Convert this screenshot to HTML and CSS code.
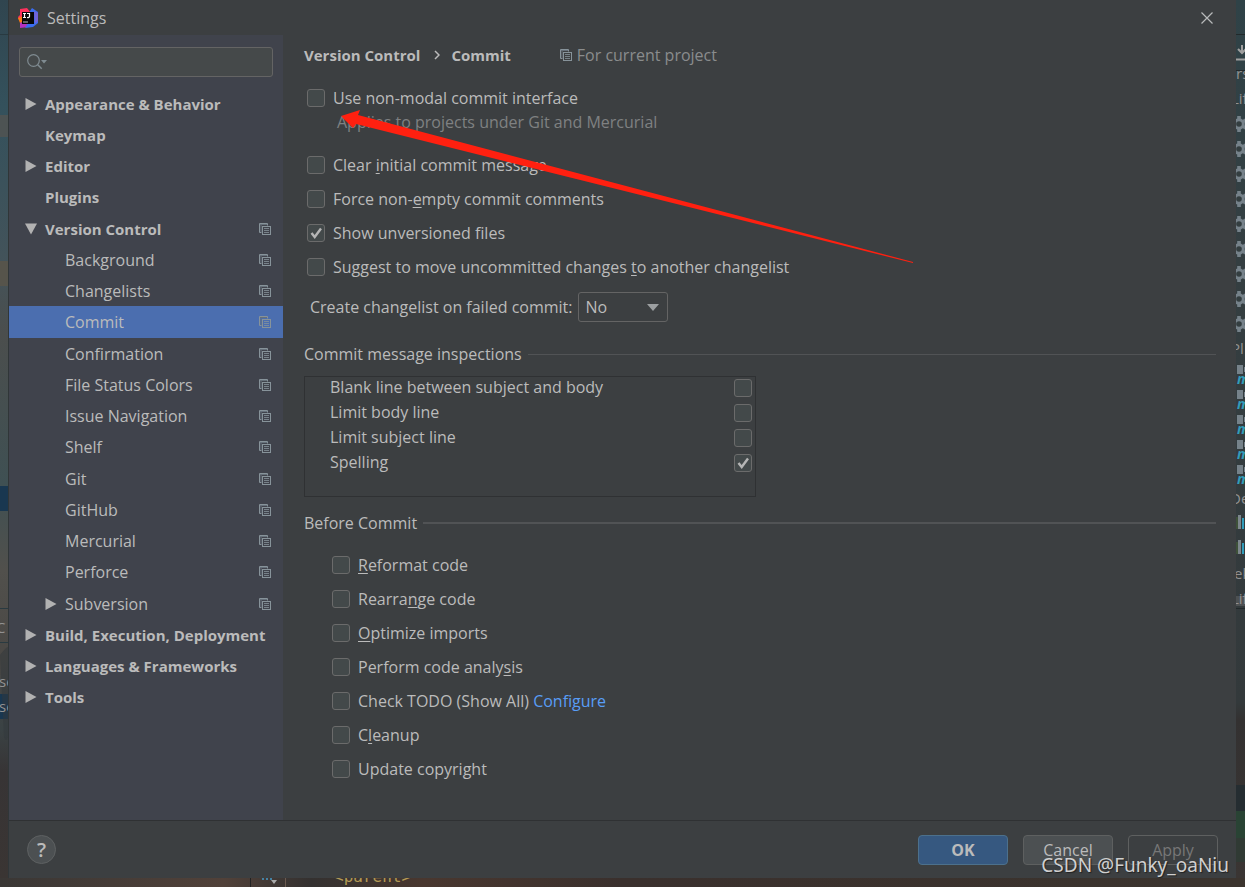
FILE: index.html
```html
<!DOCTYPE html>
<html lang="en">
<head>
<meta charset="utf-8">
<title>Settings</title>
<link rel="stylesheet" href="styles.css">
</head>
<body>
<svg class="defs" width="0" height="0" aria-hidden="true">
  <symbol id="copy" viewBox="0 0 12 12">
    <path d="M.5 9.500V.5h8v2M.5 9.500h2" fill="none" stroke="#87939a"/>
    <path d="M1 1.500h7M2 1v8" stroke="#66707a" fill="none"/>
    <rect x="3.500" y="3.500" width="8" height="8" fill="none" stroke="#87939a"/>
    <path d="M5 5.500h5M5 7.500h5M5 9.500h5" stroke="#87939a" stroke-width=".8"/>
  </symbol>
  <symbol id="right" viewBox="0 0 11 12"><path d="M0 0v12L11 6z" fill="#b2b2b2"/></symbol>
  <symbol id="down" viewBox="0 0 12 11"><path d="M0 0h12L6 11z" fill="#b2b2b2"/></symbol>
  <symbol id="gear" viewBox="0 0 16 16">
    <circle cx="8" cy="8" r="5.800" fill="#76828a"/>
    <path d="M8 0v16M1.100 4l13.800 8M1.100 12l13.800-8" stroke="#76828a" stroke-width="3.600"/>
    <circle cx="8" cy="8" r="2.800" fill="#343e40"/>
  </symbol>
  <symbol id="module" viewBox="0 0 16 19"><path d="M6 0h6v9H6zM13 2h3v5h-3z" fill="#76828a"/></symbol>
</svg>

<div class="desktop">
  <svg class="edge" aria-hidden="true">
    <defs><linearGradient id="lg" x1="0" y1="0" x2="0" y2="1">
      <stop offset="0" stop-color="#30454f"/><stop offset=".12" stop-color="#34515c"/><stop offset=".3" stop-color="#43535a"/>
      <stop offset=".38" stop-color="#4b4e4d"/><stop offset=".55" stop-color="#3f5053"/><stop offset=".65" stop-color="#51504c"/>
      <stop offset=".75" stop-color="#4a4845"/><stop offset=".83" stop-color="#3a4244"/><stop offset=".88" stop-color="#373435"/><stop offset="1" stop-color="#3a3533"/>
    </linearGradient></defs>
    <rect width="9" height="100%" fill="url(#lg)"/>
    <path d="M0 34.500h8M0 608.500h8M0 642.500h8" stroke="#293a41"/>
    <path d="M0 115h8v22H0z" fill="#4d5353"/>
    <path d="M0 261h8v25H0z" fill="#56544b"/>
    <path d="M0 486h8v25H0zM0 694h8v25H0z" fill="#193750"/>
    <path d="M0 655q6-8 8-8v90q-2 6-4 0z" fill="#32383b" opacity=".5"/>
    <text x="-4" y="633" class="ghost">C</text><text x="-1" y="687" class="ghost">se</text><text x="-1" y="712" class="ghost">se</text>
    <path d="M8.500 0v900" stroke="#303638"/>
  </svg>

  <main class="dialog">
    <header class="titlebar">
      <svg class="logo" viewBox="0 0 20 20" aria-hidden="true">
        <path d="M2 1 9 0l4 5-4 9-8-2-1-3 2-2z" fill="#fe315d"/>
        <path d="m0 10 5-2 2 6-5 1z" fill="#f97a12"/>
        <path d="m2 15 7-3 2 7-9 1z" fill="#b531bd"/>
        <path d="m12 3 2-3 6 4v11l-5 4-8 1 5-8z" fill="#3a6df0"/>
        <path d="m16 3 4 2v8l-3 3z" fill="#7163d8"/>
        <path d="M4 4h12v12H4z" fill="#080808"/>
        <path d="M5 5.500h3M6.500 5.500v4M5 9.500h3M9 5.500h3M11.500 5v3.500q0 1.200-2.500 1" fill="none" stroke="#fff" stroke-width="1.200"/>
        <path d="M5 14h5" stroke="#bbb"/>
      </svg>
      <h1 class="title">Settings</h1>
      <button class="close" aria-label="Close"><svg viewBox="0 0 12 12"><path d="m.5.5 11 11m0-11-11 11" stroke="#b8babb" stroke-width="1.200"/></svg></button>
    </header>

    <div class="content">
      <nav class="sidebar" aria-label="Settings categories">
        <label class="search">
          <svg viewBox="0 0 21 16" aria-hidden="true"><circle cx="6.500" cy="6.500" r="5.800" fill="none" stroke="#7f8b91" stroke-width="1.200"/><path d="m10.700 10.700 4 4" stroke="#7f8b91" stroke-width="1.500"/><path d="M14 6h6l-3 3.500z" fill="#7f8b91"/></svg>
          <input type="text" aria-label="Search settings">
        </label>
        <ul class="tree">
          <li class="row top"><svg class="arrow"><use href="#right"/></svg><span>Appearance &amp; Behavior</span></li>
          <li class="row top leaf"><span>Keymap</span></li>
          <li class="row top"><svg class="arrow"><use href="#right"/></svg><span>Editor</span></li>
          <li class="row top leaf"><span>Plugins</span></li>
          <li class="row top"><svg class="arrow"><use href="#down"/></svg><span>Version Control</span><svg class="copy"><use href="#copy"/></svg></li>
          <li class="row child"><span>Background</span><svg class="copy"><use href="#copy"/></svg></li>
          <li class="row child"><span>Changelists</span><svg class="copy"><use href="#copy"/></svg></li>
          <li class="row child selected"><span>Commit</span><svg class="copy"><use href="#copy"/></svg></li>
          <li class="row child"><span>Confirmation</span><svg class="copy"><use href="#copy"/></svg></li>
          <li class="row child"><span>File Status Colors</span><svg class="copy"><use href="#copy"/></svg></li>
          <li class="row child"><span>Issue Navigation</span><svg class="copy"><use href="#copy"/></svg></li>
          <li class="row child"><span>Shelf</span><svg class="copy"><use href="#copy"/></svg></li>
          <li class="row child"><span>Git</span><svg class="copy"><use href="#copy"/></svg></li>
          <li class="row child"><span>GitHub</span><svg class="copy"><use href="#copy"/></svg></li>
          <li class="row child"><span>Mercurial</span><svg class="copy"><use href="#copy"/></svg></li>
          <li class="row child"><span>Perforce</span><svg class="copy"><use href="#copy"/></svg></li>
          <li class="row branch"><svg class="arrow"><use href="#right"/></svg><span>Subversion</span><svg class="copy"><use href="#copy"/></svg></li>
          <li class="row top"><svg class="arrow"><use href="#right"/></svg><span>Build, Execution, Deployment</span></li>
          <li class="row top"><svg class="arrow"><use href="#right"/></svg><span>Languages &amp; Frameworks</span></li>
          <li class="row top"><svg class="arrow"><use href="#right"/></svg><span>Tools</span></li>
        </ul>
      </nav>

      <section class="panel">
        <div class="crumbs">
          <b>Version Control</b>
          <svg class="chevron" viewBox="0 0 6 10"><path d="m1 1 4 4-4 4" fill="none" stroke="#bbb" stroke-width="1.500"/></svg>
          <b>Commit</b>
          <span class="scope"><svg class="copy"><use href="#copy"/></svg>For current project</span>
        </div>

        <div class="modal-option">
          <label class="check"><input type="checkbox"><span>Use non-modal commit interface</span></label>
          <p class="hint">Applies to projects under Git and Mercurial</p>
        </div>
        <div class="options">
          <label class="check"><input type="checkbox"><span>Clear <u>i</u>nitial commit message</span></label>
          <label class="check"><input type="checkbox"><span>Force non-<u>e</u>mpty commit comments</span></label>
          <label class="check"><input type="checkbox" checked><span>Show unversioned files</span></label>
          <label class="check"><input type="checkbox"><span>Suggest to move uncommitted changes <u>t</u>o another changelist</span></label>
        </div>

        <div class="field">
          <label for="failed">Create changelist on failed commit:</label>
          <span class="combo">
            <select id="failed"><option>No</option><option>Yes</option><option>Ask</option></select>
            <svg viewBox="0 0 12 7" aria-hidden="true"><path d="M0 0h12L6 7z" fill="#9c9fa1"/></svg>
          </span>
        </div>

        <h2 class="section">Commit message inspections</h2>
        <div class="inspections">
          <table>
            <tr><td><label for="i1">Blank line between subject and body</label></td><td><input id="i1" type="checkbox"></td></tr>
            <tr><td><label for="i2">Limit body line</label></td><td><input id="i2" type="checkbox"></td></tr>
            <tr><td><label for="i3">Limit subject line</label></td><td><input id="i3" type="checkbox"></td></tr>
            <tr><td><label for="i4">Spelling</label></td><td><input id="i4" type="checkbox" checked></td></tr>
          </table>
        </div>

        <h2 class="section before">Before Commit</h2>
        <div class="options indented">
          <label class="check"><input type="checkbox"><span><u>R</u>eformat code</span></label>
          <label class="check"><input type="checkbox"><span>Rearra<u>n</u>ge code</span></label>
          <label class="check"><input type="checkbox"><span><u>O</u>ptimize imports</span></label>
          <label class="check"><input type="checkbox"><span>Perform code analy<u>s</u>is</span></label>
          <div class="check"><input id="todo" type="checkbox"><span><label for="todo">Check TODO (Show All)</label> <a href="#">Configure</a></span></div>
          <label class="check"><input type="checkbox"><span>C<u>l</u>eanup</span></label>
          <label class="check"><input type="checkbox"><span>Update copyright</span></label>
        </div>

        <svg class="pointer" viewBox="0 0 574 154" aria-hidden="true"><path d="M0 6 19 0l-2 5 555 147v1L15 14l-3 4z" fill="#ff2010"/></svg>
      </section>
    </div>

    <footer class="footer">
      <button class="help" aria-label="Help">?</button>
      <button class="btn primary">OK</button>
      <button class="btn">Cancel</button>
      <button class="btn" disabled>Apply</button>
    </footer>
  </main>

  <svg class="edge" aria-hidden="true">
    <defs><linearGradient id="rg" x1="0" y1="0" x2="0" y2="1">
      <stop offset="0" stop-color="#2f4247"/><stop offset=".3" stop-color="#343e41"/><stop offset=".8" stop-color="#33393b"/><stop offset=".82" stop-color="#333131"/><stop offset="1" stop-color="#3a3533"/>
    </linearGradient></defs>
    <rect width="9" height="100%" fill="url(#rg)"/>
    <path d="M0 34.500h9M0 70.500h9M0 608.500h9" stroke="#22292b"/>
    <path d="M6 45v7m-4-3 4 4 4-4" stroke="#a0a0a0" stroke-width="2" fill="none"/><path d="M0 59.500h9" stroke="#a0a0a0" stroke-width="2"/>
    <text x="0" y="79" class="ghost">rs</text><text x="-5" y="104" class="ghost">Lif</text>
    <g>
      <use href="#gear" x="-5" y="116" width="16" height="16"/><use href="#gear" x="-5" y="141" width="16" height="16"/><use href="#gear" x="-5" y="166" width="16" height="16"/>
      <use href="#gear" x="-5" y="191" width="16" height="16"/><use href="#gear" x="-5" y="216" width="16" height="16"/><use href="#gear" x="-5" y="241" width="16" height="16"/>
      <use href="#gear" x="-5" y="266" width="16" height="16"/><use href="#gear" x="-5" y="291" width="16" height="16"/><use href="#gear" x="-5" y="316" width="16" height="16"/>
    </g>
    <text x="-5" y="354" class="ghost">Pl</text>
    <g>
      <use href="#module" x="-5" y="365" width="16" height="19"/><use href="#module" x="-5" y="390" width="16" height="19"/><use href="#module" x="-5" y="415" width="16" height="19"/><use href="#module" x="-5" y="440" width="16" height="19"/><use href="#module" x="-5" y="465" width="16" height="19"/>
    </g>
    <text x="1" y="384" class="maven">m</text><text x="1" y="409" class="maven">m</text><text x="1" y="434" class="maven">m</text><text x="1" y="459" class="maven">m</text><text x="1" y="484" class="maven">m</text>
    <text x="-6" y="504" class="ghost">De</text>
    <path d="M0 517h2v12H0zM0 542h2v12H0z" fill="#3e5139"/><path d="M2 515h3v14H2zM2 540h3v14H2z" fill="#7c868c"/><path d="M6 518h2v11H6zM6 543h2v11H6z" fill="#319cba"/>
    <text x="-2" y="579" class="ghost">ek</text><path d="M0 596h9v10H0z" fill="#4d5153"/><text x="-5" y="604" class="ghost">Lif</text>
    <path d="M0 785h9v26H0z" fill="#252d31"/><path d="M0 811h9v27H0z" fill="#294334"/><path d="M0 838h9v24H0z" fill="#303a34"/>
  </svg>

  <svg class="strip" aria-hidden="true">
    <defs><linearGradient id="bg"><stop offset="0" stop-color="#3a3735"/><stop offset=".18" stop-color="#514139"/><stop offset=".25" stop-color="#343130"/><stop offset=".34" stop-color="#49372f"/><stop offset=".5" stop-color="#3a302d"/><stop offset="1" stop-color="#3b342e"/></linearGradient></defs>
    <rect width="100%" height="9" fill="url(#bg)"/>
    <path d="M250.500 0v9" stroke="#222"/><path d="M285.500 0v9" stroke="#6b5a50"/>
    <path d="M262 1h2m2 0h2m2 0h2" stroke="#4482a4" stroke-width="2"/><path d="M271 2h6l-3 4z" fill="#aaa"/>
    <text x="334" y="4" class="code">&lt;parent&gt;</text>
  </svg>
  <div class="watermark">CSDN @Funky_oaNiu</div>
</div>
</body>
</html>
```
FILE: styles.css
```css
* { box-sizing: border-box; }
body {
  margin: 0;
  background: #3a3533;
  color: #bbbbbb;
  font: 16px/24px "Open Sans", "Noto Sans", sans-serif;
}
h1, h2, p, ul { margin: 0; padding: 0; font-size: 16px; font-weight: 400; }
button, input, select { font: inherit; color: inherit; margin: 0; }
svg { display: block; flex: none; }
.defs { position: absolute; }

.desktop {
  position: relative;
  display: grid;
  grid-template-columns: 9px minmax(0, 1fr) 9px;
  grid-template-rows: 1fr 9px;
  min-height: 100vh;
}
.edge { width: 9px; height: 100%; overflow: hidden; }
.strip { grid-column: 1 / -1; width: 100%; height: 9px; overflow: hidden; }
.ghost { fill: #929292; font-size: 15px; }
.maven { fill: #319cba; font-size: 14px; font-weight: 700; font-style: italic; }
.code { fill: #b39a55; font: 16px "DejaVu Sans Mono", monospace; }

.dialog { display: flex; flex-direction: column; background: #3c3f41; }
.titlebar { display: flex; align-items: center; height: 35px; padding: 0 23px 0 9px; }
.logo { width: 20px; height: 20px; }
.title { flex: 1; margin-left: 9px; }
.close { padding: 0; border: 0; background: none; }
.close svg { width: 12px; height: 12px; }

.content { flex: 1; display: flex; }
.sidebar { flex: none; width: 274px; padding-top: 12px; background: #40434c; }
.search {
  display: flex;
  align-items: center;
  height: 30px;
  margin: 0 10px 11px;
  padding-left: 7px;
  border: 1px solid #646464;
  border-radius: 3px;
  background: #45494a;
}
.search svg { width: 21px; height: 16px; }
.search input { flex: 1; min-width: 0; border: 0; outline: 0; background: none; }
.tree { list-style: none; }
.row { display: flex; align-items: center; height: 31px; padding: 0 12px 0 16px; white-space: nowrap; }
.row:nth-child(4n) { height: 32px; }
.row span { flex: 1; }
.top, .crumbs b { font-size: 15px; font-weight: 700; }
.row.leaf { padding-left: 36px; }
.row.child { padding-left: 56px; }
.row.branch { padding-left: 36px; }
.selected { background: #4b6eaf; }
.arrow { width: 12px; height: 12px; margin-right: 8px; }
.copy { width: 12px; height: 12px; }

.panel { position: relative; flex: 1; min-width: 0; padding: 8px 20px 20px 21px; }
.crumbs { display: flex; align-items: center; }
.chevron { width: 6px; height: 10px; margin: 0 11px 0 14px; }
.scope { display: flex; align-items: center; gap: 5px; margin-left: 49px; color: #8a8c8d; }
.modal-option { padding: 19px 0 0 3px; }
.hint { padding-left: 30px; color: #7f8182; }
.options { display: flex; flex-direction: column; align-items: flex-start; gap: 10px; padding: 19px 0 0 3px; }
.indented { padding: 18px 0 0 28px; }
.check { display: flex; align-items: center; gap: 8px; }
u { text-underline-offset: 2px; }
a { color: #589df6; text-decoration: none; }

input[type="checkbox"] {
  appearance: none;
  display: block;
  flex: none;
  width: 18px;
  height: 18px;
  border: 1px solid #6b6b6b;
  border-radius: 3px;
  background: #43494a;
}
input[type="checkbox"]:checked {
  background: #43494a url('data:image/svg+xml,<svg xmlns="http://www.w3.org/2000/svg" viewBox="0 0 16 16"><path d="m3.500 8 3.200 4L13 3.500" fill="none" stroke="%23b5b5b5" stroke-width="2.400"/></svg>');
}

.field { display: flex; align-items: center; gap: 6px; padding: 13px 0 20px 6px; }
.combo { position: relative; }
.combo select {
  appearance: none;
  display: block;
  width: 90px;
  height: 30px;
  padding: 0 6px;
  border: 1px solid #646464;
  border-radius: 3px;
  background: #3c3f41;
}
.combo svg { position: absolute; right: 9px; top: 12px; width: 12px; height: 7px; pointer-events: none; }

.section { display: flex; align-items: center; gap: 6px; }
.section::after { content: ""; flex: 1; height: 1px; background: #515355; }
.before { margin-top: 14px; }
.before::after { height: 2px; }
.inspections { max-width: 452px; margin-top: 10px; padding-bottom: 19px; border: 1px solid #2f3133; }
table { width: 100%; border-collapse: collapse; line-height: 21px; }
td { height: 25px; padding: 0 3px 4px 25px; }
td:last-child { width: 46px; }

.pointer { position: absolute; left: 58px; top: 75px; width: 574px; height: 154px; pointer-events: none; }

.footer { display: flex; align-items: center; gap: 15px; height: 58px; padding: 0 18px; border-top: 1px solid #2f3133; }
.help {
  width: 29px;
  height: 29px;
  margin-right: auto;
  padding: 0;
  border: 1px solid #5e6162;
  border-radius: 50%;
  background: #4c5052;
  font-size: 20px;
  font-weight: 600;
}
.btn { width: 90px; height: 30px; padding: 0; border: 1px solid #5e6060; border-radius: 4px; background: #4c5052; }
.primary { border-color: #4c708c; background: #365880; font-weight: 700; }
.btn:disabled { background: none; color: #777777; }

.watermark {
  position: absolute;
  right: 16px;
  bottom: 10px;
  color: #d0d0d0;
  font: 19px/24px "Noto Sans", sans-serif;
  text-shadow: 1px 1px 1px #222222;
}
```
